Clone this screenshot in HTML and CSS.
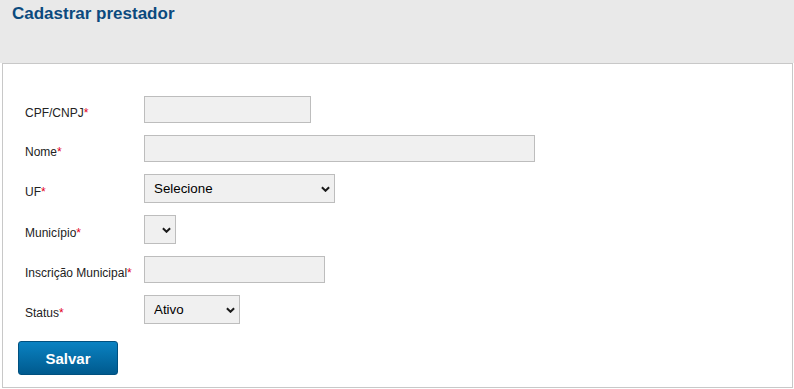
FILE: index.html
```html
<!DOCTYPE html>
<html lang="pt-BR">

<head>
    <meta charset="UTF-8">
    <meta name="viewport" content="width=device-width, initial-scale=1.0">
    <title>Cadastrar prestador</title>
    <link rel="stylesheet" href="styles.css">
</head>

<body>
    <header class="page-header">
        <h1>Cadastrar prestador</h1>
    </header>

    <div class="panel">
        <form class="form-grid">
            <!-- CPF/CNPJ -->
            <label for="doc">CPF/CNPJ<span class="req">*</span></label>
            <div><input type="text" id="doc" class="field w-doc"></div>

            <!-- Nome -->
            <label for="nome">Nome<span class="req">*</span></label>
            <div><input type="text" id="nome" class="field w-nome"></div>

            <!-- UF -->
            <label for="uf">UF<span class="req">*</span></label>
            <div>
                <span class="select-wrap">
                    <select id="uf" class="field w-uf">
                        <option>Selecione</option>
                    </select>
                    <svg class="chev" viewBox="0 0 10 6" width="9" height="6"><path d="M1 1 L5 5 L9 1"/></svg>
                </span>
            </div>

            <!-- Municipio -->
            <label for="municipio">Município<span class="req">*</span></label>
            <div>
                <span class="select-wrap">
                    <select id="municipio" class="field w-mun">
                        <option></option>
                    </select>
                    <svg class="chev" viewBox="0 0 10 6" width="9" height="6"><path d="M1 1 L5 5 L9 1"/></svg>
                </span>
            </div>

            <!-- Inscricao -->
            <label for="insc">Inscrição Municipal<span class="req">*</span></label>
            <div><input type="text" id="insc" class="field w-insc"></div>

            <!-- Status -->
            <label for="status">Status<span class="req">*</span></label>
            <div>
                <span class="select-wrap">
                    <select id="status" class="field w-status">
                        <option>Ativo</option>
                        <option>Inativo</option>
                    </select>
                    <svg class="chev" viewBox="0 0 10 6" width="9" height="6"><path d="M1 1 L5 5 L9 1"/></svg>
                </span>
            </div>
        </form>

        <button type="button" class="btn-save">Salvar</button>
    </div>
</body>

</html>
```

FILE: styles.css
```css
body {
    margin: 0;
    font-family: 'Liberation Sans', Arial, sans-serif;
    background-color: #ffffff;
    color: #222;
}

.page-header {
    height: 63px;
    box-sizing: border-box;
    padding: 4px 12px 0;
    background-color: #e9e9e9;
}

.page-header h1 {
    margin: 0;
    font-size: 17px;
    line-height: 20px;
    font-weight: bold;
    color: #0b4a7e;
}

.panel {
    margin: 0 1px 0 2px;
    height: 325px;
    box-sizing: border-box;
    border: 1px solid #c8c8c8;
    padding: 32px 0 0 15px;
}

.form-grid {
    display: grid;
    grid-template-columns: 119px auto;
    row-gap: 12px;
    align-items: center;
    padding-left: 7px;
}

.form-grid label {
    font-size: 12px;
    padding-top: 6px;
    color: #222;
}

.req {
    color: #e2001a;
}

.field {
    display: block;
    box-sizing: border-box;
    margin: 0;
    border: 1px solid #bdbdbd;
    background-color: #f0f0f0;
    font-family: 'Liberation Sans', Arial, sans-serif;
    font-size: 13.33px;
    color: #000;
    border-radius: 0;
    outline: none;
}

input.field {
    height: 27px;
    padding: 0 9px;
}

select.field {
    height: 29px;
    padding: 0 20px 0 9px;
    appearance: none;
    -webkit-appearance: none;
}

.select-wrap {
    position: relative;
    display: inline-block;
    vertical-align: top;
}

.chev {
    position: absolute;
    right: 5px;
    top: 12px;
    fill: none;
    stroke: #1a1a1a;
    stroke-width: 2.2;
    pointer-events: none;
}

.w-doc { width: 167px; }
.w-nome { width: 391px; }
.w-uf { width: 191px; }
.w-mun { width: 32px; }
.w-insc { width: 181px; }
.w-status { width: 96px; }

.btn-save {
    display: block;
    margin-top: 17px;
    width: 100px;
    height: 34px;
    border: 1px solid #00507f;
    border-radius: 3px;
    background: linear-gradient(#0a82c2, #005a8e);
    color: #ffffff;
    font-family: 'Liberation Sans', Arial, sans-serif;
    font-size: 15px;
    font-weight: bold;
    cursor: pointer;
}
```
